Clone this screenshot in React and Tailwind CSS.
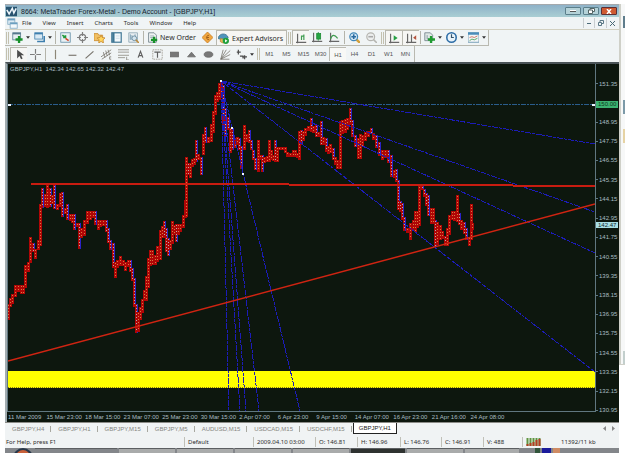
import React from 'react';

const glyphs = {
  app: (
    <>
      <rect x="0" y="1" width="14" height="12" fill="#27536f" />
      <path d="M1 5l3 5 4-7 2 6 3-6" stroke="#eef6fa" strokeWidth="2" fill="none" />
    </>
  ),
  windows: (
    <>
      <rect x="1" y="1" width="9" height="7" fill="#dceaf3" stroke="#7fa8c2" />
      <path d="M1 2h9" stroke="#6b9fc0" strokeWidth="2" />
      <rect x="4" y="6" width="9" height="7" fill="#f4f9fc" stroke="#7fa8c2" />
      <path d="M4 7h9" stroke="#6b9fc0" strokeWidth="2" />
    </>
  ),
  newChart: (
    <>
      <rect x="1" y="1" width="10" height="9" fill="#e6eef2" stroke="#55798c" />
      <path d="M1 2h10" stroke="#55798c" strokeWidth="2" />
      <path d="M9 5v9M4.500 9.500h9" stroke="#17912a" strokeWidth="3" />
    </>
  ),
  profiles: (
    <>
      <rect x="1" y="1" width="10" height="8" fill="#d9e9f4" stroke="#3e7fae" />
      <path d="M1 2h10" stroke="#3e7fae" strokeWidth="2" />
      <path d="M4 12h9V5" stroke="#3e7fae" strokeWidth="2" fill="none" />
    </>
  ),
  market: (
    <>
      <rect x="1" y="1" width="12" height="12" fill="#e8f1f5" stroke="#5d8ba3" />
      <path d="M3 4l4 3M7 4v3H4" stroke="#20993c" strokeWidth="2" fill="none" />
      <path d="M7 8l4 3" stroke="#d3482c" strokeWidth="2" />
    </>
  ),
  target: (
    <>
      <circle cx="7" cy="7" r="4" fill="none" stroke="#7e7e7e" strokeWidth="1.500" />
      <path d="M7 0v5M7 9v5M0 7h5M9 7h5" stroke="#7e7e7e" strokeWidth="1.500" />
    </>
  ),
  navigator: (
    <>
      <path d="M0 2h5l1 2h5v7H0z" fill="#f1c063" stroke="#c98a2c" />
      <path d="M9 4l1.500 3 3.500.5-2.500 2.500.5 4-3-2-3 2 .5-4L4 7.500 7.500 7z" fill="#ffd55e" stroke="#c5862b" />
    </>
  ),
  terminal: (
    <>
      <rect x="1" y="1" width="12" height="12" fill="#f3f8fb" stroke="#3d7593" strokeWidth="1.500" />
      <path d="M3 1v12" stroke="#3d7593" strokeWidth="3" />
      <path d="M6 5h5M6 8h5" stroke="#c8dae5" />
    </>
  ),
  tester: (
    <>
      <path d="M1 1h11v12H1z" fill="#e9eff2" stroke="#87a2b1" />
      <path d="M3 3v7M5 4v6M9 3v4" stroke="#5e8aa5" />
      <circle cx="8" cy="8" r="3" fill="#d3e4ee" stroke="#5a7f95" />
      <path d="M10 10l4 4" stroke="#bc8a3c" strokeWidth="2" />
    </>
  ),
  order: (
    <>
      <path d="M2 1h7l3 3v9H2z" fill="#eef2f3" stroke="#6a7c85" />
      <path d="M4 5h5M4 7h4" stroke="#8fa2ab" />
      <path d="M9 6v8M5 10h8" stroke="#17912a" strokeWidth="3" />
    </>
  ),
  diamond: (
    <>
      <path d="M7 0l7 7-7 7-7-7z" fill="#f0a63f" stroke="#c67a1e" />
      <path d="M9 4.500C5 3 5 11 9 9.500M6 7h3" stroke="#8c4e12" fill="none" />
    </>
  ),
  expert: (
    <>
      <path d="M0 7c1-7 11-8 13-1L7 9z" fill="#4f94bb" stroke="#3d7390" />
      <path d="M3 7v4l4 2V8z" fill="#e9bc5c" stroke="#b5872f" />
      <circle cx="10" cy="10" r="4" fill="#1fa03b" />
      <path d="M9 8l3 2-3 2z" fill="#fff" />
    </>
  ),
  bars: (
    <>
      <path d="M2 1v12M0 12h13" stroke="#676767" strokeWidth="1.500" fill="none" />
      <path d="M7 9V4h3M10 2v7" stroke="#3f9c50" strokeWidth="1.500" fill="none" />
    </>
  ),
  candles: (
    <>
      <path d="M2 1v12M0 12h13" stroke="#676767" strokeWidth="1.500" fill="none" />
      <path d="M8 0v11" stroke="#1c8c34" />
      <rect x="6" y="2" width="5" height="7" fill="#25a544" stroke="#1c8c34" />
    </>
  ),
  line: (
    <>
      <path d="M2 1v12M0 12h13" stroke="#676767" strokeWidth="1.500" fill="none" />
      <path d="M2 9c2-6 5-6 9-1" stroke="#3f9c50" strokeWidth="1.500" fill="none" />
    </>
  ),
  zoomIn: (
    <>
      <path d="M9 9l5 5" stroke="#d3a03a" strokeWidth="3" />
      <circle cx="6" cy="6" r="5" fill="#cfe4f3" stroke="#4388b8" strokeWidth="1.500" />
      <path d="M6 3v6M3 6h6" stroke="#2769a0" strokeWidth="2" />
    </>
  ),
  zoomOut: (
    <>
      <path d="M9 9l5 5" stroke="#b5b5b0" strokeWidth="2" />
      <circle cx="6" cy="6" r="5" fill="#eceeee" stroke="#b5b5b0" strokeWidth="1.500" />
      <path d="M3 6h6" stroke="#a8a8a8" strokeWidth="2" />
    </>
  ),
  scroll: (
    <>
      <path d="M2 1v12M0 12h13" stroke="#676767" strokeWidth="1.500" fill="none" />
      <path d="M6 3l5 3.500L6 10z" fill="#27a043" />
    </>
  ),
  shift: (
    <>
      <path d="M2 1v12M0 12h13M7 2v9" stroke="#676767" strokeWidth="1.500" fill="none" />
      <path d="M13 3v6L9 6z" fill="#b5543e" />
    </>
  ),
  indicators: (
    <>
      <path d="M1 1h7l3 3v7H1z" fill="#dfe8e4" stroke="#6a7c85" />
      <path d="M4 4v5h3" stroke="#789" fill="none" />
      <path d="M9 5v9M5 9.500h9" stroke="#1f9b30" strokeWidth="3" />
    </>
  ),
  clock: (
    <>
      <circle cx="7" cy="7" r="6" fill="#e9f3fa" stroke="#2d6da6" strokeWidth="2" />
      <path d="M7 3v4h3" stroke="#35536b" fill="none" strokeWidth="1.500" />
    </>
  ),
  template: (
    <>
      <rect x="0" y="1" width="14" height="12" fill="#f2f6f7" stroke="#5b8ba8" />
      <path d="M0 2h14" stroke="#4a8dba" strokeWidth="3" />
      <path d="M2 7l3-1 3 1 4-2" stroke="#c65c45" fill="none" />
      <path d="M2 11l3-2 3 1 4-2" stroke="#35994a" fill="none" />
    </>
  ),
  cursor: <path d="M4 1v11l3-3 2 4 2-1-2-4h4z" fill="#4c4c4c" />,
  cross: <path d="M7 0v6M7 8v6M0 7h6M8 7h6" stroke="#7c7c7c" strokeWidth="1.500" />,
  vline: <path d="M7 1v12" stroke="#8d8677" strokeWidth="1.500" />,
  hline: <path d="M2 8h10" stroke="#7d7870" strokeWidth="1.500" />,
  diag: <path d="M2 12L12 3" stroke="#77736b" strokeWidth="1.500" />,
  channel: (
    <path d="M0 10L13 1M1 13L13 5M3 4l2 7M6 2l2 7M9 1l2 7M13 10h-2v3h2" stroke="#77736b" fill="none" />
  ),
  fibo: <path d="M0 1h14M0 4h14M0 8h14M0 11h9M11 10v4h3" stroke="#8a867d" fill="none" />,
  letter: <path d="M4 11L7 3l3 8M5 8.500h4" stroke="#5f5f5f" strokeWidth="1.500" fill="none" />,
  label: (
    <>
      <rect x="1" y="1" width="12" height="12" fill="none" stroke="#9a958a" strokeDasharray="2 1" />
      <path d="M3 4h8M7 4v7" stroke="#5f5f5f" strokeWidth="1.500" />
    </>
  ),
  rect: <rect x="2" y="4" width="10" height="6" fill="#777" stroke="#666" />,
  triangle: <path d="M7 4l5 6H2z" fill="#777" stroke="#666" />,
  ellipse: <ellipse cx="7" cy="7" rx="5.500" ry="3.500" fill="#777" stroke="#666" />,
  fan: <path d="M1 13L4 1M1 13L8 1M1 13L13 2M1 13L13 7M1 13h11" stroke="#77736b" fill="none" />,
  arrows: (
    <path d="M1 4h5M3 1v6M5 9h4v3M8 10h6M11 8v5" stroke="#4c4c4c" strokeWidth="1.500" fill="none" />
  ),
};

const Glyph = ({ name }) => (
  <svg viewBox="0 0 14 14" className="w-[11px] h-[11px] shrink-0" aria-hidden="true">
    {glyphs[name]}
  </svg>
);

const Caret = () => (
  <svg viewBox="0 0 5 3" className="w-[4px] h-[3px] shrink-0" aria-hidden="true">
    <path d="M0 0h5L2.500 3z" fill="#333" />
  </svg>
);

const Tool = ({ name, pressed }) => (
  <button
    type="button"
    aria-label={name}
    className={`w-[17px] h-[15px] shrink-0 flex items-center justify-center ${
      pressed ? 'bg-[#f6f6f4] border-l border-t border-[#b9b9b0]' : ''
    }`}
  >
    <Glyph name={name} />
  </button>
);

const DropTool = ({ name }) => (
  <button type="button" aria-label={name} className="w-[22px] h-[15px] shrink-0 flex items-center gap-[3px] pl-[2px]">
    <Glyph name={name} />
    <Caret />
  </button>
);

const Divider = () => <div className="w-px h-[13px] mx-px bg-[#b4b4aa] shrink-0" />;

const Grip = () => <div className="w-[3px] h-[12px] mx-px border-x border-[#c3c0ae] shrink-0" />;

const menus = ['File', 'View', 'Insert', 'Charts', 'Tools', 'Window', 'Help'];
const periods = ['M1', 'M5', 'M15', 'M30', 'H1', 'H4', 'D1', 'W1', 'MN'];

const prices = [
  '151.35', '150.15', '148.95', '147.75', '146.55', '145.35', '144.15', '142.95', '141.75',
  '140.55', '139.35', '138.15', '136.95', '135.75', '134.55', '133.35', '132.15', '130.95',
];

const times = [
  '11 Mar 2009', '15 Mar 23:00', '18 Mar 15:00', '23 Mar 07:00', '25 Mar 23:00',
  '30 Mar 15:00', '2 Apr 07:00', '6 Apr 23:00', '9 Apr 15:00', '14 Apr 07:00',
  '16 Apr 23:00', '21 Apr 16:00', '24 Apr 08:00',
];

const tabs = ['GBPJPY,H4', 'GBPJPY,H1', 'GBPJPY,M15', 'GBPJPY,M5', 'AUDUSD,M15', 'USDCAD,M15', 'USDCHF,M15'];

// x, high, low, 1 when the bar closes down
const bars = [
  [8, 304, 320], [10, 298, 307], [12, 294, 304], [15, 285, 297], [18, 285, 292], [21, 285, 294],
  [23, 285, 294], [25, 265, 288], [28, 262, 272], [30, 237, 263], [33, 243, 252, 1], [35, 249, 259],
  [38, 240, 250], [40, 204, 246], [42, 188, 208, 1], [45, 194, 207], [47, 185, 208], [50, 188, 207, 1],
  [52, 195, 204], [54, 185, 209, 1], [57, 204, 210], [60, 193, 207], [62, 192, 217, 1], [65, 208, 214],
  [67, 204, 220, 1], [70, 214, 221], [72, 214, 223], [74, 214, 230, 1], [77, 223, 227], [79, 223, 249, 1],
  [81, 228, 238], [84, 220, 236], [87, 211, 224], [90, 211, 220], [93, 211, 218], [95, 211, 225, 1],
  [98, 220, 230], [100, 220, 227], [103, 220, 226], [106, 220, 232, 1], [108, 228, 243, 1],
  [110, 240, 250, 1], [113, 243, 268, 1], [115, 262, 278], [117, 260, 268], [120, 256, 266],
  [123, 260, 266], [125, 262, 271], [128, 260, 267], [130, 260, 272, 1], [132, 268, 281, 1],
  [134, 278, 307, 1], [136, 304, 333, 1], [138, 312, 332], [140, 307, 320], [142, 299, 313],
  [144, 290, 301], [146, 276, 301], [148, 258, 288], [150, 250, 266], [152, 250, 265], [155, 255, 265],
  [157, 246, 262], [160, 230, 260], [162, 226, 238], [164, 221, 238, 1], [166, 228, 252, 1],
  [168, 238, 256, 1], [170, 240, 250], [172, 221, 244], [174, 225, 235], [176, 224, 242, 1],
  [178, 224, 235], [180, 224, 232], [183, 215, 228], [185, 200, 218], [186, 157, 217],
  [188, 163, 175, 1], [190, 163, 178], [192, 159, 167], [194, 158, 165], [196, 140, 162, 1],
  [198, 154, 160], [201, 157, 175, 1], [203, 134, 155], [205, 127, 143, 1], [208, 137, 143],
  [211, 124, 142], [213, 111, 133], [215, 95, 115], [217, 92, 102], [219, 83, 100], [221, 81, 96],
  [223, 85, 130, 1], [225, 108, 137, 1], [228, 117, 130, 1], [230, 128, 153], [232, 128, 150, 1],
  [235, 138, 148], [237, 137, 145], [239, 138, 150, 1], [241, 146, 169, 1], [244, 125, 150],
  [246, 134, 142], [249, 130, 143, 1], [251, 140, 150, 1], [253, 150, 160, 1], [255, 158, 170, 1],
  [258, 140, 172], [260, 155, 160], [262, 155, 172, 1], [264, 157, 163], [267, 156, 162],
  [269, 140, 162], [271, 150, 160], [273, 155, 161], [275, 140, 162, 1], [277, 147, 162],
  [279, 147, 150], [282, 147, 150], [285, 147, 153], [287, 152, 157], [290, 153, 157], [293, 150, 157],
  [295, 150, 157], [297, 153, 158], [299, 131, 160], [301, 130, 145, 1], [303, 131, 141],
  [305, 128, 136], [308, 126, 131], [311, 118, 132, 1], [313, 126, 133], [316, 125, 137, 1],
  [318, 132, 137], [321, 121, 145, 1], [323, 137, 145], [326, 138, 152, 1], [328, 146, 154],
  [330, 144, 153], [333, 148, 160, 1], [335, 157, 165], [337, 160, 169], [340, 121, 169],
  [342, 120, 134], [345, 119, 133], [347, 118, 130], [350, 108, 125, 1], [352, 120, 137, 1],
  [355, 135, 147, 1], [358, 138, 159], [360, 134, 159], [362, 135, 147], [365, 132, 141],
  [368, 131, 137], [371, 128, 134, 1], [373, 133, 140], [376, 135, 148, 1], [379, 142, 156, 1],
  [382, 150, 160], [385, 150, 158], [388, 150, 163, 1], [391, 155, 177, 1], [394, 170, 178],
  [396, 169, 182, 1], [398, 180, 210, 1], [400, 201, 212, 1], [402, 203, 220, 1], [404, 217, 231, 1],
  [407, 228, 233], [410, 223, 240], [413, 220, 230], [415, 211, 232], [417, 211, 228], [419, 186, 226],
  [422, 186, 190, 1], [424, 189, 197, 1], [426, 193, 206, 1], [428, 195, 216, 1], [431, 208, 224],
  [433, 208, 224], [435, 220, 247, 1], [437, 222, 245], [440, 225, 240], [442, 231, 239],
  [445, 236, 246, 1], [447, 228, 246], [449, 215, 235], [452, 211, 220], [454, 211, 221],
  [457, 195, 222], [459, 213, 225, 1], [461, 220, 230], [464, 222, 234, 1], [466, 228, 240, 1],
  [469, 237, 246], [471, 204, 240], [472, 223, 230],
];

const fanEnds = [
  [595, 144], [595, 212], [595, 253], [595, 372], [229, 411], [240, 411], [246, 411], [259, 411], [300, 411],
];

const Plot = () => (
  <svg
    viewBox="8 64 587 347"
    preserveAspectRatio="none"
    className="block w-full h-[347px]"
    role="img"
    aria-label="GBPJPY H1 chart"
    shapeRendering="crispEdges"
  >
    <rect x="8" y="371" width="587" height="17" fill="#ffff00" />
    <path d="M8 387.500H595" stroke="#8a7a10" strokeDasharray="1 1" />
    <path d="M8 104.500H595" stroke="#2a5d8c" strokeDasharray="5 1 2 1" />
    {bars.map(([x, high, low, down]) => (
      <g key={x}>
        <rect x={x - 1} y={high} width="3" height={low - high} fill="#b00606" />
        {down && <rect x={x + 1} y={high} width="1" height={low - high} fill="#2a22c8" />}
        <path d={`M${x + 0.5} ${high + 1}V${low - 1}`} stroke={down ? '#b9a5b0' : '#d97a40'} strokeDasharray="1 2" />
      </g>
    ))}
    {fanEnds.map(([x, y]) => (
      <path key={`${x}-${y}`} d={`M221 81L${x} ${y}`} stroke="#1c1cb8" strokeDasharray="6 1 3 1" />
    ))}
    <path d="M31 184L144 184L430 185L595 186" stroke="#c81c10" strokeWidth="2" fill="none" />
    <path d="M8 361L595 204" stroke="#cf2412" strokeWidth="1.500" shapeRendering="auto" />
    <g fill="#eef4ff">
      <rect x="220" y="80" width="2" height="2" />
      <rect x="231" y="127" width="2" height="2" />
      <rect x="242" y="173" width="2" height="2" />
      <rect x="8" y="104" width="3" height="2" />
      <rect x="592" y="104" width="3" height="2" />
    </g>
  </svg>
);

const Chart = () => (
  <section className="relative flex bg-[#0d170e] border-t-2 border-l-2 border-t-[#4a5357] border-l-[#a3adb0] text-[#a9bcc2]">
    <div className="flex-1 min-w-0">
      <div className="border-l border-b border-r border-[#607780]">
        <Plot />
      </div>
      <div className="flex h-[10px] pl-px pr-[87px] text-[6px] leading-[10px]">
        {times.map((time) => (
          <span key={time} className="flex-1 min-w-0 whitespace-nowrap">
            {time}
          </span>
        ))}
      </div>
    </div>
    <div className="w-[23px] shrink-0 flex flex-col pt-[10px] pb-[2px] text-[6px] leading-none">
      {prices.map((price) => (
        <span key={price} className="flex-1 flex items-center gap-px">
          <span className="w-[2px] h-px bg-[#607780]" />
          {price}
        </span>
      ))}
    </div>
    <p className="absolute left-[3px] top-[1px] text-[6px] leading-[8px] whitespace-pre">
      GBPJPY,H1  142.34 142.65 142.32 142.47
    </p>
    <span className="absolute right-px top-[37px] w-[22px] h-[7px] pl-[2px] bg-[#3cb371] text-[#0d3a20] text-[6px] leading-[7px]">
      150.00
    </span>
    <span className="absolute right-px top-[158px] w-[22px] h-[6px] pl-[2px] bg-[#a9dfe4] text-[#10282c] text-[6px] leading-[6px]">
      142.47
    </span>
  </section>
);

const App = () => {
  return (
    <div className="flex bg-white pt-[4px] font-['Liberation_Sans',sans-serif] text-[#2b2b2b]">
      <main className="flex-1 min-w-0 pl-[5px]">
        <header className="h-[13px] flex items-center gap-[4px] pl-px border-t border-[#a5a9ac] bg-linear-to-b from-[#8fb2c8] to-[#a9ced3]">
          <Glyph name="app" />
          <h1 className="flex-1 text-[7px] leading-[11px] whitespace-nowrap text-[#16232c]">
            8664: MetaTrader Forex-Metal - Demo Account - [GBPJPY,H1]
          </h1>
          <div className="flex gap-[2px] pr-[2px]">
            <button type="button" aria-label="Minimize" className="w-[16px] h-[8px] rounded-[1px] border border-[#5b7f8b] bg-[#b5d2d8] flex items-center justify-center">
              <span className="w-[6px] h-[2px] bg-white border-b border-[#555]" />
            </button>
            <button type="button" aria-label="Restore" className="w-[16px] h-[8px] rounded-[1px] border border-[#5b7f8b] bg-[#b5d2d8] flex items-center justify-center">
              <svg viewBox="0 0 7 6" className="w-[7px] h-[6px]">
                <path d="M2 2V.5h4.500v3H5M.5 2h4v3.500h-4z" stroke="#566" fill="#fff" />
              </svg>
            </button>
            <button type="button" aria-label="Close" className="w-[16px] h-[8px] rounded-[1px] border border-[#5c2f35] bg-[#cf5a31] flex items-center justify-center">
              <svg viewBox="0 0 6 5" className="w-[6px] h-[5px]">
                <path d="M1 0l4 5M5 0L1 5" stroke="#fff" strokeWidth="1.500" />
              </svg>
            </button>
          </div>
        </header>

        <div className="bg-[#f0f4f5]">
          <nav className="h-[12px] flex items-center pl-[2px] font-['Noto_Sans',sans-serif] text-[6px] leading-[12px]">
            <Glyph name="windows" />
            <div className="flex gap-[11px] pl-[4px]">
              {menus.map((menu) => (
                <button key={menu} type="button">
                  {menu}
                </button>
              ))}
            </div>
            <div className="ml-auto flex pr-[2px]">
              <button type="button" aria-label="Minimize chart" className="w-[11px] h-[10px] border-l border-[#c9ced0] flex items-center justify-center">
                <span className="w-[4px] h-px bg-[#4b6a78]" />
              </button>
              <button type="button" aria-label="Restore chart" className="w-[12px] h-[10px] border-l border-[#c9ced0] flex items-center justify-center">
                <svg viewBox="0 0 6 6" className="w-[6px] h-[6px]">
                  <path d="M2 2V.5h3.500v3H4M.5 2.500h3v3h-3z" stroke="#5b7885" fill="none" />
                </svg>
              </button>
              <button type="button" aria-label="Close chart" className="w-[11px] h-[10px] border-l border-[#c9ced0] flex items-center justify-center">
                <svg viewBox="0 0 5 5" className="w-[5px] h-[5px]">
                  <path d="M0 0l5 5M5 0L0 5" stroke="#4b6a78" />
                </svg>
              </button>
            </div>
          </nav>

          <div className="flex border-t border-[#d2d0c0]">
            <div className="h-[16px] flex items-center border-r border-b border-[#b9b9b0]">
              <Grip />
              <DropTool name="newChart" />
              <DropTool name="profiles" />
              <Divider />
              <Tool name="market" />
              <Tool name="target" />
              <Tool name="navigator" />
              <Tool name="terminal" />
              <Tool name="tester" />
              <Divider />
              <button type="button" className="w-[54px] shrink-0 flex items-center gap-[2px] pl-[2px] font-['Noto_Sans',sans-serif] text-[7px] leading-none whitespace-nowrap">
                <Glyph name="order" />
                New Order
              </button>
              <Tool name="diamond" />
              <button type="button" className="w-[71px] h-[15px] shrink-0 flex items-center gap-[3px] pl-px border-l border-t border-r border-[#b9b9b0] bg-[#f6f6f4] font-['Noto_Sans',sans-serif] text-[7px] leading-none whitespace-nowrap">
                <Glyph name="expert" />
                Expert Advisors
              </button>
              <Grip />
              <Tool name="bars" pressed />
              <Tool name="candles" />
              <Tool name="line" />
              <Divider />
              <Tool name="zoomIn" />
              <Tool name="zoomOut" />
              <Grip />
              <Tool name="scroll" pressed />
              <Tool name="shift" pressed />
              <Divider />
              <DropTool name="indicators" />
              <DropTool name="clock" />
              <DropTool name="template" />
            </div>
          </div>

          <div className="flex">
            <div className="h-[16px] flex items-center border-r border-[#b9b9b0]">
              <Grip />
              <Tool name="cursor" pressed />
              <Tool name="cross" />
              <Divider />
              <Tool name="vline" />
              <Tool name="hline" />
              <Tool name="diag" />
              <Tool name="channel" />
              <Tool name="fibo" />
              <Tool name="letter" />
              <Tool name="label" />
              <Tool name="rect" />
              <Tool name="triangle" />
              <Tool name="ellipse" />
              <Tool name="fan" />
              <DropTool name="arrows" />
              <Grip />
              {periods.map((period) => (
                <button
                  key={period}
                  type="button"
                  className={`w-[17px] h-[14px] shrink-0 text-[6px] leading-none text-[#555] ${
                    period === 'H1' ? 'border-l border-t border-[#b9b9b0] bg-[#f8f8f6]' : ''
                  }`}
                >
                  {period}
                </button>
              ))}
            </div>
          </div>
        </div>

        <Chart />

        <div className="h-[13px] flex items-start border-t border-[#8c8c88] bg-[#f0f3f4] pl-px text-[6px] leading-[12px] text-[#85857f]">
          {tabs.map((tab) => (
            <div key={tab} className="flex items-center shrink-0 pr-px">
              <button type="button" className="px-[6px] whitespace-nowrap">
                {tab}
              </button>
              <span className="w-px h-[6px] bg-[#a8a8a0]" />
            </div>
          ))}
          <button type="button" className="shrink-0 h-[11px] px-[5px] leading-[10px] border border-t-0 border-[#222] bg-white text-[#222]">
            GBPJPY,H1
          </button>
          <div className="ml-auto flex gap-[6px] pr-[4px] pt-[3px]">
            <button type="button" aria-label="Scroll tabs left">
              <svg viewBox="0 0 3 5" className="w-[3px] h-[5px]"><path d="M3 0v5L0 2.500z" fill="#888" /></svg>
            </button>
            <button type="button" aria-label="Scroll tabs right">
              <svg viewBox="0 0 3 5" className="w-[3px] h-[5px]"><path d="M0 0v5l3-2.500z" fill="#888" /></svg>
            </button>
          </div>
        </div>

        <footer className="h-[13px] flex items-center bg-[#f0f3f4] font-['Noto_Sans',sans-serif] text-[6px] leading-[10px] whitespace-nowrap">
          <span className="flex-1 pl-px">For Help, press F1</span>
          <span className="w-[69px] pl-[3px] border-l border-[#c0c0b8]">Default</span>
          <span className="w-[62px] pl-[3px] border-l border-[#c0c0b8]">2009.04.10 03:00</span>
          <span className="w-[42px] pl-[3px] border-l border-[#c0c0b8]">O: 146.81</span>
          <span className="w-[43px] pl-[3px] border-l border-[#c0c0b8]">H: 146.96</span>
          <span className="w-[41px] pl-[3px] border-l border-[#c0c0b8]">L: 146.76</span>
          <span className="w-[42px] pl-[3px] border-l border-[#c0c0b8]">C: 146.91</span>
          <span className="w-[39px] pl-[3px] border-l border-[#c0c0b8]">V: 488</span>
          <span className="w-[97px] pl-[3px] flex items-center gap-[20px] border-l border-[#c0c0b8]">
            <svg viewBox="0 0 15 8" className="w-[15px] h-[8px]">
              <path d="M1.500 0v8M4.500 0v8M7.500 0v8M10.500 0v8M13.500 0v8" stroke="#5f9440" strokeWidth="2" />
              <path d="M1.500 6v2M4.500 5v3M7.500 4v4M10.500 2v6M13.500 1v7" stroke="#b53c22" strokeWidth="2" />
            </svg>
            11392/11 kb
          </span>
        </footer>

        <div className="h-[5px] flex gap-[2px] pl-[8px] overflow-hidden bg-[#83868a]">
          <svg viewBox="0 0 20 5" className="w-[20px] h-[5px] shrink-0">
            <circle cx="10" cy="10" r="10" fill="#27374a" />
            <circle cx="10" cy="9" r="7" fill="#c9613a" />
          </svg>
          <span className="flex-1 border-t border-[#5c5f62]" />
          <span className="w-[56px] bg-[#a9abab] border-t border-[#5c5f62]" />
          <span className="w-[56px] bg-[#a9abab] border-t border-[#5c5f62]" />
          <span className="w-[56px] bg-[#a9abab] border-t border-[#5c5f62]" />
          <span className="w-[56px] bg-[#a9abab] border-t border-[#5c5f62]" />
          <span className="w-[54px] bg-[#2e3230] border-t border-[#5c5f62]" />
          <span className="w-[56px] bg-[#a9abab] border-t border-[#5c5f62]" />
          <span className="w-[54px] bg-[#a9abab] border-t border-[#5c5f62]" />
          <span className="w-[98px] flex gap-[2px] pl-[14px]">
            <span className="w-[5px] bg-[#31543b]" />
            <span className="w-[9px] bg-[#1b1b9c]" />
            <span className="w-[7px] bg-[#cf8b63]" />
          </span>
        </div>
      </main>

      <aside className="w-[6px] shrink-0">
        <div className="h-[361px] flex flex-col border-l-2 border-b border-[#cfd0c8] bg-[#f7f8f8] pl-[2px]">
          <span className="h-[12px]" />
          <span className="h-[12px] bg-[#5f7d8c]" />
          <span className="h-[72px]" />
          <span className="h-[14px] bg-[#7c9aa8]" />
          <span className="h-[15px]" />
          <span className="h-[14px] bg-[#e6d3a4]" />
          <span className="mt-auto h-[13px] bg-[#c3cfcd]" />
        </div>
      </aside>
    </div>
  );
};

export default App;
